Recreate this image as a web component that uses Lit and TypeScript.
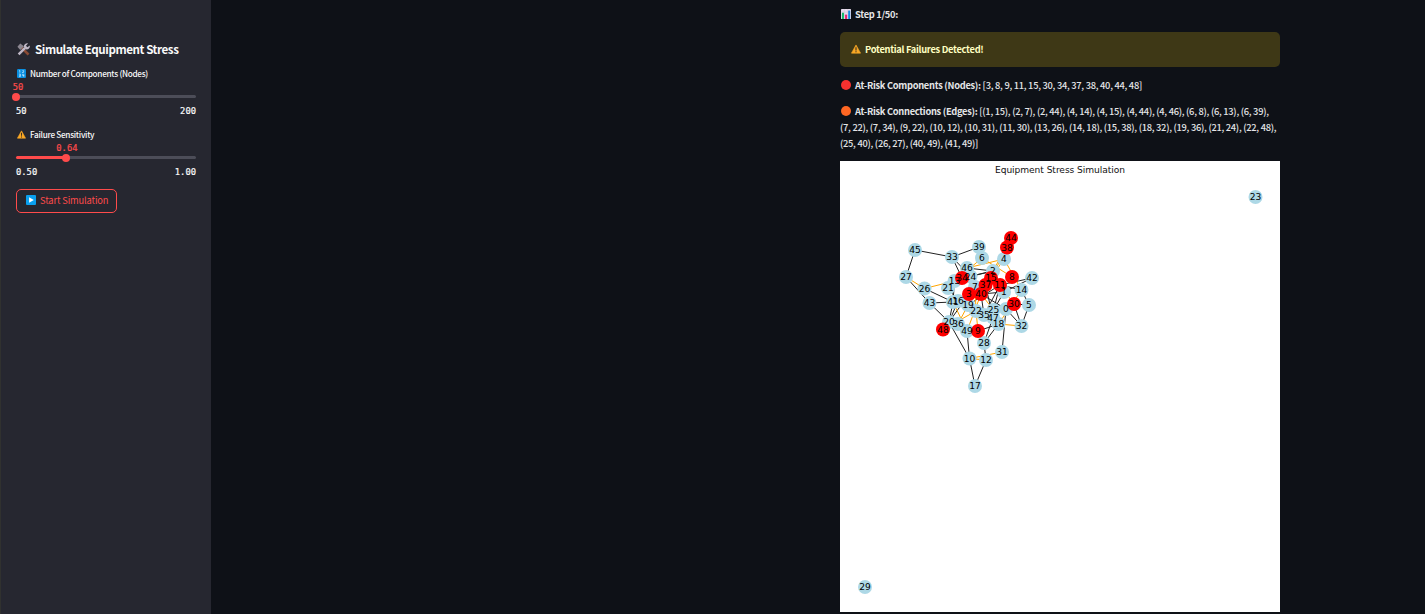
import { LitElement, html, svg, css } from "lit";
import { customElement } from "lit/decorators.js";

type Pt = [number, number];
const NODES: Record<number, Pt> = {
  0: [1006, 309], 1: [1004, 292], 2: [993, 271], 3: [969, 294], 4: [1004, 259], 5: [1029, 305], 6: [982, 258],
  7: [975, 287], 8: [1012, 277], 9: [978, 331], 10: [969.5, 358.5], 11: [1000, 285], 12: [986, 360], 13: [954.5, 281],
  14: [1021.5, 290], 15: [991, 278], 16: [958, 301], 17: [975, 386], 18: [998.5, 324], 19: [968, 305], 20: [949, 322],
  21: [948, 288], 22: [976, 311], 23: [1255.5, 197], 24: [970.5, 276.5], 25: [993.5, 310], 26: [924.5, 288.5], 27: [906, 277],
  28: [984, 343], 29: [865, 587], 30: [1014, 304], 31: [1002, 352], 32: [1021.5, 326], 33: [952, 257], 34: [962, 278],
  35: [984, 315], 36: [958, 324], 37: [985.5, 285], 38: [1007, 247.5], 39: [979, 247], 40: [981, 294], 41: [953, 302],
  42: [1032, 278], 43: [929.5, 303], 44: [1011, 238], 45: [915, 250], 46: [967, 268], 47: [993, 317.5], 48: [943, 329.5], 49: [967, 331],
};
const RISK = [3, 8, 9, 11, 15, 30, 34, 37, 38, 40, 44, 48];
const ORANGE: Pt[] = [
  [1, 15], [2, 7], [2, 44], [4, 14], [4, 15], [4, 44], [4, 46], [6, 8], [6, 13], [6, 39], [7, 22], [7, 34], [9, 22],
  [10, 12], [10, 31], [11, 30], [13, 26], [14, 18], [15, 38], [18, 32], [19, 36], [21, 24], [22, 48], [25, 40],
  [26, 27], [40, 49], [41, 49],
];
const BLACK: Pt[] = [
  [33, 45], [27, 45], [33, 39], [27, 43], [26, 41], [41, 43], [20, 43], [33, 34], [33, 24], [10, 20], [10, 49], [10, 17],
  [12, 17], [12, 28], [31, 0], [5, 32], [5, 14], [5, 30], [0, 32], [30, 32], [42, 11], [42, 1], [14, 11], [18, 28],
  [18, 47], [9, 28], [9, 18], [47, 28], [20, 41], [20, 16], [16, 3], [41, 13], [21, 16], [2, 24], [46, 2], [2, 34],
  [11, 25], [40, 1], [11, 19], [40, 35], [1, 25], [11, 35], [40, 0], [37, 47], [3, 22], [20, 3],
];

const tile = (inner: unknown) => html`<svg class="emoji" viewBox="0 0 16 16">${inner}</svg>`;
const warning = tile(svg`<path d="M8 1.5 15.3 14.6H.7Z" fill="#f9a825" stroke="#f9a825" stroke-linejoin="round"/><path d="M8 5v5.2M8 11.6v1.7" stroke="#3b3024" stroke-width="1.8"/>`);
const dot = (c: string) => tile(svg`<circle cx="8" cy="8" r="8" fill=${c}/>`);
const tools = tile(svg`<path d="m5.5 5.5 8.7 8.8" stroke="#8a4b35" stroke-width="3.2"/><path d="M.5 4.5 4 .5 8.500 4 4 8.500Z" fill="#8c8791"/><path d="m2 14 8-8" stroke="#c0b8c6" stroke-width="3"/><path d="M13.5 .5 11 3.3l1.8 1.9L15.7 3c.7 3-1.8 5.5-4.9 4.7L8.5 5C8 2.2 10.5 0 13.5 .5Z" fill="#c0b8c6"/>`);
const numbers = tile(svg`<rect width="16" height="16" rx="2" fill="#0a8fe0"/><path d="M5 2.5v4M3.8 3.3 5 2.5M9.5 3H12v1.5l-2.5 2H12M3.5 9H6v4.5H3.5M3.7 11.2H6M10 9v2.5h2.8M12 9v5" fill="none" stroke="#d4f1ff" stroke-width="1.2"/>`);
const play = tile(svg`<rect width="16" height="16" rx="1.5" fill="#0aa0f0"/><path d="M5 3.5 12.5 8 5 12.5Z" fill="#fff"/>`);
const chart = tile(svg`<rect width="16" height="16" rx="1" fill="#e6dcec"/><path d="M5.3 0v16M10.7 0v16M0 5h16M0 10h16" stroke="#c5b8cf" stroke-width=".6"/><path d="M1.5 6h3.2v10H1.5Z" fill="#12b76a"/><path d="M6.5 9h3.2v7H6.5Z" fill="#e91e72"/><path d="M11.5 2.5h3.2V16h-3.2Z" fill="#1489e0"/>`);

@customElement("stress-graph")
export class StressGraph extends LitElement {
  static styles = css`
    :host { display: block; height: 451px; background: #fff; }
    .plot { display: block; }
    .label { font: 9.1px "DejaVu Sans", sans-serif; text-anchor: middle; fill: #000; }
    .title { font: 9.1px "DejaVu Sans", sans-serif; fill: #111; }
    .edge { stroke-width: 1; }
  `;
  private edge([a, b]: Pt, color: string) {
    const [p, q] = [NODES[a], NODES[b]];
    return svg`<line class="edge" x1=${p[0]} y1=${p[1]} x2=${q[0]} y2=${q[1]} stroke=${color}/>`;
  }
  private node(id: number, color: string) {
    return svg`<circle cx=${NODES[id][0]} cy=${NODES[id][1]} r="7" fill=${color}/>`;
  }
  render() {
    const ids = Object.keys(NODES).map(Number);
    return html`<svg class="plot" width="440" height="451" viewBox="840 161 440 451">
      <text class="title" x="995" y="173" textLength="130">Equipment Stress Simulation</text>
      ${BLACK.map((e) => this.edge(e, "#222"))}${ORANGE.map((e) => this.edge(e, "orange"))}
      ${ids.filter((i) => !RISK.includes(i)).map((i) => this.node(i, "#add8e6"))}
      ${RISK.map((i) => this.node(i, "#f00"))}
      ${ids.map((i) => svg`<text class="label" x=${NODES[i][0]} y=${NODES[i][1] + 3.2}>${i}</text>`)}
    </svg>`;
  }
}

@customElement("app-root")
export class AppRoot extends LitElement {
  static styles = css`
    :host { display: flex; height: 614px; overflow: hidden; background: #0e1117; color: #fafafa;
      font: 500 9.3px/16px "Noto Sans CJK JP", "Noto Sans CJK SC", sans-serif; }
    * { box-sizing: border-box; }
    .emoji { width: 10px; height: 10px; flex: none; }
    .side { width: 211px; flex: none; background: #262730; padding: 39px 15px 0; border-left: 1px solid #30312f; }
    .row { display: flex; align-items: center; white-space: pre; }
    .heading { height: 20px; gap: 5px; padding-left: 1px; font-size: 11.6px; font-weight: 700; letter-spacing: -0.43px; }
    .heading .emoji { width: 13px; height: 13px; }
    .caption { height: 14px; margin: 7px 0 1px; gap: 4px; font-size: 8.2px; padding-left: 1px; letter-spacing: -0.29px; }
    .caption .emoji { width: 9px; height: 9px; }
    .second { margin-top: 10px; }
    .mono { font: 8.8px/12px "DejaVu Sans Mono", monospace; -webkit-text-stroke: 0.2px currentColor; }
    .value { color: #ff4b4b; display: flex; height: 12px; }
    .value span { width: 40px; margin-left: -19.5px; text-align: center; flex: none; }
    .value .first { margin-left: -18px; }
    .track { height: 7px; display: flex; align-items: center; }
    .fill { height: 2.6px; background: #ff4b4b; border-radius: 2px 0 0 2px; }
    .thumb { width: 8px; height: 8px; border-radius: 50%; background: #ff4b4b; margin: 0 -4px; z-index: 1; flex: none; }
    .rest { height: 2.6px; flex: 1; background: #4c4d58; border-radius: 0 2px 2px 0; }
    .ends { display: flex; justify-content: space-between; margin-top: 5px; }
    .button { width: 101px; height: 24px; margin-top: 11px; padding: 0 9px 2px; gap: 4px; border: 1px solid #ff4b4b; border-radius: 5px;
      background: none; color: #ff4b4b; font: inherit; font-weight: 400; letter-spacing: -0.13px; }
    .main { width: 440px; margin-left: 629px; display: flex; flex-direction: column; }
    .line { height: 16px; gap: 4px; color: #e4e5e7; letter-spacing: -0.268px; }
    .line .emoji { margin-left: 1px; }
    .step { margin-top: 6px; }
    .alert { height: 35px; margin: 10px 0; padding: 0 11px 1px; gap: 4px; background: #3e3816; color: #ffffc2; border-radius: 5px; flex: none; }
    .edges { margin: 10px 0; }
    b { font-weight: 700; letter-spacing: -0.29px; }
  `;
  private slider(min: string, max: string, value: string, pct: number) {
    return html`<div class="value mono"><i style="width:${pct}%"></i><span class=${pct ? "" : "first"}>${value}</span></div>
      <div class="track"><div class="fill" style="width:${pct}%"></div><div class="thumb"></div><div class="rest"></div></div>
      <div class="ends mono"><span>${min}</span><span>${max}</span></div>`;
  }
  render() {
    return html`
      <aside class="side">
        <div class="row heading">${tools}<span>Simulate Equipment Stress</span></div>
        <div class="row caption">${numbers}<span>Number of Components (Nodes)</span></div>
        ${this.slider("50", "200", "50", 0)}
        <div class="row caption second">${warning}<span>Failure Sensitivity</span></div>
        ${this.slider("0.50", "1.00", "0.64", 28)}
        <button class="row button">${play}<span>Start Simulation</span></button>
      </aside>
      <main class="main">
        <div class="row line step">${chart}<b>Step 1/50:</b></div>
        <div class="row alert">${warning}<b>Potential Failures Detected!</b></div>
        <div class="row line">${dot("#f8312f")}<span><b>At-Risk Components (Nodes):</b> [3, 8, 9, 11, 15, 30, 34, 37, 38, 40, 44, 48]</span></div>
        <div class="edges">
          <div class="row line">${dot("#ff6723")}<span><b>At-Risk Connections (Edges):</b> [(1, 15), (2, 7), (2, 44), (4, 14), (4, 15), (4, 44), (4, 46), (6, 8), (6, 13), (6, 39),</span></div>
          <div class="row line">(7, 22), (7, 34), (9, 22), (10, 12), (10, 31), (11, 30), (13, 26), (14, 18), (15, 38), (18, 32), (19, 36), (21, 24), (22, 48),</div>
          <div class="row line">(25, 40), (26, 27), (40, 49), (41, 49)]</div>
        </div>
        <stress-graph></stress-graph>
      </main>`;
  }
}
